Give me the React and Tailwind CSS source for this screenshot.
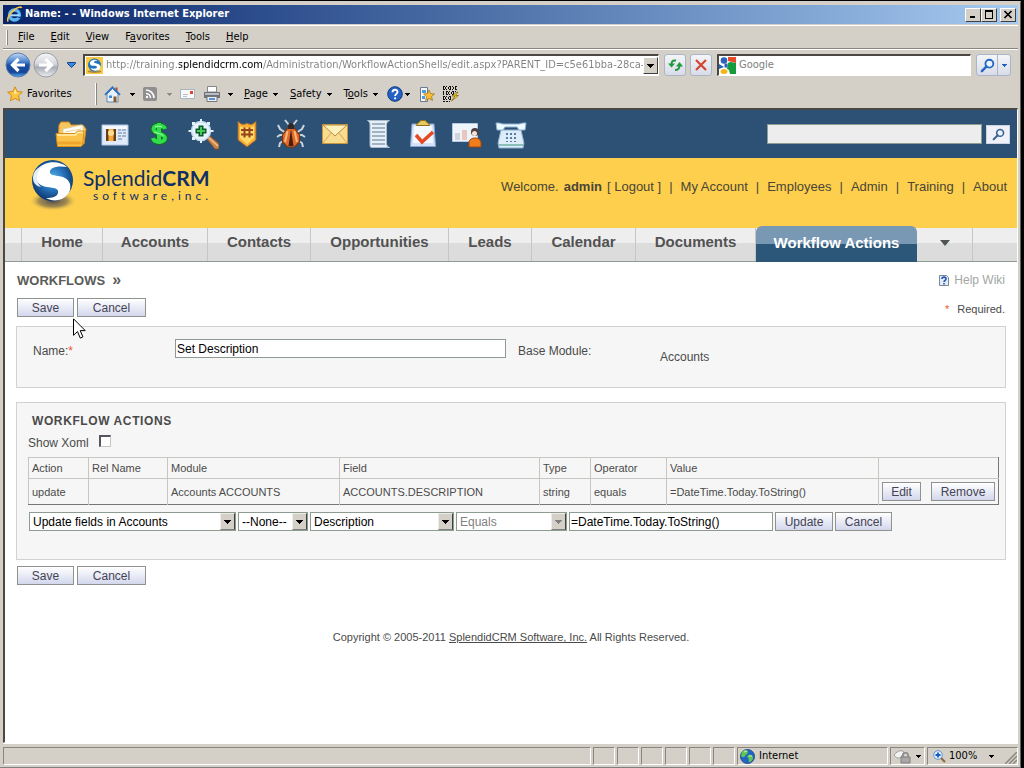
import React from "react";

const chromeFont = "font-['DejaVu_Sans_Condensed','DejaVu_Sans',sans-serif]";

function Caret({ className = "text-black" }) {
  return (
    <svg className={`shrink-0 ${className}`} width="5" height="3" viewBox="0 0 5 3" fill="currentColor" shapeRendering="crispEdges">
      <path d="M0 0h5v1H0zM1 1h3v1H1zM2 2h1v1H2z" />
    </svg>
  );
}

function IeLogo() {
  return (
    <svg className="shrink-0" width="17" height="17" viewBox="0 0 17 17" fill="none">
      <circle cx="8.500" cy="9" r="5" stroke="#5cb6f5" strokeWidth="3.400" />
      <path d="M4.500 9.300h9" stroke="#a6dcff" strokeWidth="2" />
      <path d="M10.500 10.700h5v2l-2.500-.8z" fill="#123c7c" />
      <path d="M2.200 15.500C.5 13 3.500 7.500 8 4c4-3 7-3.500 7.500-2" stroke="#f7c341" strokeWidth="1.600" />
    </svg>
  );
}

function CaptionButton({ label, children }) {
  return (
    <button aria-label={label} className="flex h-[14px] w-4 items-center justify-center border border-t-white border-l-white border-r-[#404040] border-b-[#404040] bg-[#d4d0c8]">
      <svg width="10" height="9" viewBox="0 0 10 9" fill="none" stroke="#000" shapeRendering="crispEdges">{children}</svg>
    </button>
  );
}

function TitleBar() {
  return (
    <header className="flex h-[19px] items-center justify-between bg-linear-to-r from-[#0a246a] to-[#a6caf0] pr-[2px] pl-[3px]">
      <div className="flex items-center gap-[2px] text-[11px] font-bold whitespace-nowrap text-white">
        <IeLogo />
        <h1>Name: - - Windows Internet Explorer</h1>
      </div>
      <div className="flex">
        <CaptionButton label="Minimize"><path d="M2 7h5" strokeWidth="2" /></CaptionButton>
        <CaptionButton label="Maximize"><path d="M1 1h8" strokeWidth="2" /><path d="M1.500 1v7.500h7V1" /></CaptionButton>
        <span className="w-[3px]" />
        <CaptionButton label="Close">
          <path d="M1.500 1l7 7M8.500 1l-7 7" strokeWidth="1.700" shapeRendering="auto" />
        </CaptionButton>
      </div>
    </header>
  );
}

function Grip() {
  return <span className="w-[2px] shrink-0 self-stretch border-l border-white border-r border-r-[#8a867e]" />;
}

function MenuBar() {
  const items = [["", "F", "ile"], ["", "E", "dit"], ["", "V", "iew"], ["F", "a", "vorites"], ["", "T", "ools"], ["", "H", "elp"]];
  return (
    <nav className="mt-px flex h-6 items-center gap-[10px] border-t border-b border-t-white border-b-[#8a867e] pl-[3px] text-[11px] text-black">
      <span className="flex h-[15px]"><Grip /></span>
      <div className="flex gap-4">
        {items.map(([a, b, c]) => (
          <button key={a + b + c}>{a}<u>{b}</u>{c}</button>
        ))}
      </div>
    </nav>
  );
}

function RoundArrow({ back }) {
  return (
    <svg width="26" height="26" viewBox="0 0 26 26">
      <defs>
        <linearGradient id="backFill" x1="0" y1="0" x2="0" y2="1">
          <stop offset="0" stopColor="#c4daf3" /><stop offset=".35" stopColor="#4e86d0" />
          <stop offset=".5" stopColor="#1a4fa6" /><stop offset=".8" stopColor="#164596" /><stop offset="1" stopColor="#56b4ee" />
        </linearGradient>
        <linearGradient id="forwardFill" x1="0" y1="0" x2="0" y2="1">
          <stop offset="0" stopColor="#f6f7f9" /><stop offset=".45" stopColor="#d4d7dc" />
          <stop offset=".6" stopColor="#a8adb6" /><stop offset="1" stopColor="#eceef1" />
        </linearGradient>
      </defs>
      <circle cx="13" cy="13" r="12" fill={back ? "url(#backFill)" : "url(#forwardFill)"} stroke={back ? "#5f7fae" : "#9a9da3"} />
      <path d={back ? "M20 13H8M13.500 7L7.500 13l6 6" : "M6 13h12M12.500 7l6 6-6 6"} fill="none" stroke="#fff" strokeWidth="3.200" />
    </svg>
  );
}

function SplendidIcon() {
  return (
    <svg className="shrink-0" width="17" height="17" viewBox="0 0 17 17">
      <path d="M0 0h17v17H0z" fill="#fdca45" />
      <ellipse cx="8.500" cy="14.500" rx="7" ry="1.500" fill="#a98b46" />
      <circle cx="8.500" cy="8" r="6.500" fill="#2374bd" />
      <path d="M12 3.500C8 1.500 3 4 4 7s7 1 7 3-4 2-6.500 1c2 4 9 3.500 10-.5S9 6.500 8 5.500s2-2 4-2z" fill="#fff" />
    </svg>
  );
}

function ToolButton({ label, className, children }) {
  return (
    <button aria-label={label} className={`flex h-[22px] items-center justify-center border border-[#a9b5c8] bg-linear-to-b from-[#f4f5f8] to-[#d9dce8] ${className}`}>
      {children}
    </button>
  );
}

function SearchGlyph({ size = 15, color = "#2467c4" }) {
  return (
    <svg width={size} height={size} viewBox="0 0 16 16" fill="none" stroke={color}>
      <circle cx="10" cy="6" r="4.200" strokeWidth="2" fill="#eaf3ff" />
      <path d="M7 9l-5 5" strokeWidth="2.600" strokeLinecap="round" />
    </svg>
  );
}

function AddressBar() {
  return (
    <div className="flex h-[31px] items-center border-t border-white pr-[7px] pl-[2px]">
      <div className="flex items-center gap-[2px]">
        <button aria-label="Back"><RoundArrow back /></button>
        <button aria-label="Forward"><RoundArrow /></button>
      </div>
      <button aria-label="Recent pages" className="mx-1 flex w-4 justify-center">
        <svg width="9" height="6" viewBox="0 0 9 6"><path d="M.5.5h8v1L4.500 5.500.5 1.500z" fill="#3a8be0" stroke="#1b3f86" /></svg>
      </button>
      <div className="flex h-[22px] min-w-0 flex-1 items-center border-t-2 border-r border-b border-l-2 border-t-[#4b4843] border-l-[#4b4843] border-r-white border-b-white bg-white pl-px">
        <SplendidIcon />
        <input
          aria-label="Address"
          readOnly
          value="http://training.splendidcrm.com/Administration/WorkflowActionShells/edit.aspx?PARENT_ID=c5e61bba-28ca-4526"
          className="ml-[3px] min-w-0 flex-1 bg-[linear-gradient(90deg,#808080_73px,#000_73px,#000_157px,#808080_157px)] bg-clip-text text-[11px] text-transparent outline-none"
        />
        <button aria-label="Show address list" className="flex h-[17px] w-[15px] items-center justify-center border border-t-white border-l-white border-r-[#404040] border-b-[#404040] bg-[#d4d0c8]">
          <svg width="7" height="4" viewBox="0 0 7 4" shapeRendering="crispEdges"><path d="M0 0h7v1H0zM1 1h5v1H1zM2 2h3v1H2zM3 3h1v1H3z" /></svg>
        </button>
      </div>
      <div className="mx-[5px] flex gap-1">
        <ToolButton label="Refresh" className="w-[22px] rounded-[3px]">
          <svg width="15" height="14" viewBox="0 0 15 14" fill="none" stroke="#1f9a3c" strokeWidth="2">
            <path d="M8 2.500C4 2 3.500 4 3.500 7" /><path d="M0 5.500h7L3.500 9.500z" fill="#1f9a3c" stroke="none" />
            <path d="M7 12c4 0 4.500-2 4.500-5" /><path d="M8 8.500h7L11.500 4z" fill="#1f9a3c" stroke="none" />
          </svg>
        </ToolButton>
        <ToolButton label="Stop" className="w-[22px] rounded-[3px]">
          <svg width="12" height="12" viewBox="0 0 12 12" fill="none" stroke="#d2452f" strokeWidth="2.200"><path d="M1 1l10 10M11 1L1 11" /></svg>
        </ToolButton>
      </div>
      <div className="flex h-[22px] w-[254px] items-center border-t-2 border-r border-b border-l-2 border-t-[#4b4843] border-l-[#4b4843] border-r-white border-b-white bg-white">
        <svg className="shrink-0" width="17" height="17" viewBox="0 0 17 17">
          <path d="M9 0h8v6l-4-1-4-1z" fill="#e8482c" />
          <path d="M9 6c3-2 5 0 8 0v11h-6l-1-4-2-1z" fill="#159a3e" />
          <circle cx="5" cy="3.500" r="3.300" fill="#2a62bb" /><path d="M0 7l5 3-5 2z" fill="#2a62bb" />
          <path d="M5.500 6.500h3v4h-3z" fill="#2a62bb" /><ellipse cx="5" cy="14.500" rx="3.500" ry="2.500" fill="#f4b51c" />
        </svg>
        <input aria-label="Search provider" placeholder="Google" className="ml-[3px] min-w-0 flex-1 text-[11px] outline-none placeholder:text-[#808080]" />
      </div>
      <div className="ml-[5px] flex">
        <ToolButton label="Search" className="w-[22px] rounded-l-[3px]"><SearchGlyph /></ToolButton>
        <ToolButton label="Search options" className="-ml-px w-[14px] rounded-r-[3px]"><Caret className="text-[#1d5fc0]" /></ToolButton>
      </div>
    </div>
  );
}

function CommandBar() {
  return (
    <div className="flex h-7 items-center pl-1 text-[11px] whitespace-nowrap text-black">
      <button className="flex w-[88px] items-center gap-1">
        <svg width="16" height="16" viewBox="0 0 16 16"><path d="M8 .8l2.200 4.700 5.200.6-3.900 3.500 1.100 5.200L8 12.300l-4.600 2.500 1.100-5.200L.6 6.100l5.200-.6z" fill="#fbc63e" stroke="#d98a16" /><path d="M8 3l1.500 3.500L12 7 7 8z" fill="#fff1a8" /></svg>
        Favorites
      </button>
      <span className="flex h-[22px]"><Grip /></span>
      <div className="ml-[7px] flex items-center">
        <button aria-label="Home" className="w-[26px]">
          <svg width="17" height="17" viewBox="0 0 17 17">
            <path d="M11.500 1.500h2v4h-2z" fill="#b5452c" />
            <path d="M3 8l5.500-5.500L14 8v8H3z" fill="#e6f1fc" stroke="#6d87a8" />
            <path d="M1 8.800L8.500 1.300 16 8.800" fill="none" stroke="#3173bd" strokeWidth="1.800" />
            <path d="M5 9.500h3V12H5z" fill="#3a86d8" /><path d="M9.500 10.500h3V16h-3z" fill="#8a5a2a" />
          </svg>
        </button>
        <Caret />
        <button aria-label="Feeds" className="ml-2 w-6">
          <svg width="14" height="14" viewBox="0 0 14 14" fill="none" stroke="#fff">
            <rect width="14" height="14" rx="2" fill="#8f8f8f" stroke="none" />
            <path d="M3 6.500A4.500 4.500 0 017.500 11M3 3a8 8 0 018 8" strokeWidth="1.600" /><circle cx="4" cy="10" r="1.200" fill="#fff" stroke="none" />
          </svg>
        </button>
        <Caret className="text-[#8f8b84]" />
        <button aria-label="Read mail" className="ml-2 w-6">
          <svg width="15" height="10" viewBox="0 0 15 10"><path d="M.5.5h14v9H.5z" fill="#fafafa" stroke="#a9b4c4" /><path d="M3 5.500h5M3 7.500h4" stroke="#b9c0cc" /><path d="M10 2h3v3h-3z" fill="#d8462f" /></svg>
        </button>
        <button aria-label="Print" className="w-6">
          <svg width="16" height="16" viewBox="0 0 16 16">
            <path d="M3.500.5h9V6h-9z" fill="#fff" stroke="#888" /><path d="M0 6h16v6H0z" fill="#6e7278" />
            <path d="M1 7h14v2H1z" fill="#b9bdc4" /><path d="M3 10.500h10v5H3z" fill="#e8eefb" stroke="#777" /><path d="M5 12h6v2H5z" fill="#5d92dd" />
          </svg>
        </button>
        <Caret />
        <button className="ml-[11px] flex items-center gap-[5px]"><span><u>P</u>age</span><Caret /></button>
        <button className="ml-3 flex items-center gap-[5px]"><span><u>S</u>afety</span><Caret /></button>
        <button className="ml-3 flex items-center gap-[5px]"><span>T<u>o</u>ols</span><Caret /></button>
        <button aria-label="Help" className="ml-[9px] flex items-center gap-[2px]">
          <svg width="16" height="16" viewBox="0 0 16 16"><circle cx="8" cy="8" r="7.300" fill="#2560c4" stroke="#0f3880" /><path d="M5.500 6.200C5.500 3 10.500 3 10.500 6c0 1.800-2.400 2-2.400 4" fill="none" stroke="#fff" strokeWidth="1.900" /><circle cx="8.100" cy="12.300" r="1.100" fill="#fff" /></svg>
          <Caret />
        </button>
        <button aria-label="Suggested sites" className="ml-[10px]">
          <svg width="15" height="15" viewBox="0 0 15 15"><path d="M.5.5h7v14h-7z" fill="#f7fafd" stroke="#6c7b90" /><path d="M2 3h4v3H2zM2 9h3v3H2z" fill="#4c9ae0" /><path d="M9 3l1.500 3.500 4 .5-3 2.500 1 4L9 11.500 5.500 13.500l1-4-3-2.500 4-.5z" fill="#fbbd33" stroke="#9b6a12" strokeWidth=".7" /></svg>
        </button>
        <button aria-label="Binary tools" className="ml-[7px]">
          <svg width="17" height="16" viewBox="0 0 17 16" fill="none" stroke="#111">
            <g shapeRendering="crispEdges">
              <path d="M1 .5h15M1 3.500h15" strokeDasharray="2 1 1 2" /><path d="M1 2h15" strokeWidth="2" strokeDasharray="1 1 1 2" />
              <path d="M1 5.500h15M1 8.500h12" strokeDasharray="1 2 2 1" /><path d="M1 7h13" strokeWidth="2" strokeDasharray="1 2 1 1" />
              <path d="M1 10.500h8M1 13.500h8" strokeDasharray="2 1 1 2" /><path d="M1 12h8" strokeWidth="2" strokeDasharray="1 1 1 2" />
              <path d="M1 15.500h7" strokeDasharray="2 1" />
            </g>
            <path d="M15 6l-5 4h3l-3.500 5 7-5.500h-3L16 6z" fill="#ffd92b" stroke="#7a5b00" strokeWidth=".7" />
          </svg>
        </button>
      </div>
    </div>
  );
}

const moduleIcons = [
  ["Accounts", <g key="g">
    <path d="M4 7l2-3h8l2 3 12 0 3 4-2 15H3z" fill="#f6c55c" stroke="#d18c22" />
    <path d="M8 11l18-4 2 1v13H8z" fill="#fffdf3" stroke="#dfd0a4" /><path d="M10 14l16-3" stroke="#e4d5a9" />
    <path d="M1 15.500h19l2.500-2.500H29L27.500 27 26 28.500H2.500z" fill="#fbc24a" stroke="#dd8c16" /><path d="M2 17h18.500l2.500-2.500h5" fill="none" stroke="#ffeeb2" strokeWidth="1.500" />
    <path d="M3 25h23.500" stroke="#f2a52b" strokeWidth="3" />
  </g>],
  ["Contacts", <g key="g">
    <path d="M3 7h26v20H3z" fill="#dfeafa" stroke="#b6cbe8" /><path d="M4 8h24v3H4z" fill="#f4f9ff" /><path d="M7 11h10v12H7z" fill="#6b3d13" />
    <path d="M9.500 11h5v12h-5z" fill="#f4ab3c" /><circle cx="12" cy="15" r="3" fill="#ffdc94" />
    <path d="M19 12h3M23 12h4M19 15h4M24 15h3M19 18h3M23 18h4M19 21h4" stroke="#8fa0bb" strokeWidth="1.400" />
  </g>],
  ["Opportunities", <g key="g" fill="none">
    <path d="M22 11C21 7 11 6.500 10.500 11S22 15 22 20s-11 5-12 0M16 4v23" stroke="#176b2a" strokeWidth="6" />
    <path d="M22 11C21 7 11 6.500 10.500 11S22 15 22 20s-11 5-12 0M16 5v21" stroke="#30dd4a" strokeWidth="4" />
    <path d="M12 9c2-1 5-1 7 0M11 14c4 1.500 7 1.500 9.500 4" stroke="#b2ffb4" strokeWidth="1" />
  </g>],
  ["Leads", <g key="g">
    <path d="M20 21l3-3 9 8v5h-4z" fill="#c88650" stroke="#8a5426" /><path d="M22 20l9 8" stroke="#f0be8a" strokeWidth="1.500" />
    <circle cx="14" cy="13" r="9.500" fill="#e8f4fd" stroke="#c3dcf0" strokeWidth="1.500" />
    <path d="M13 1h2v3h-2zM1.500 12h3v2h-3zM23.500 12h3v2h-3zM5 4h3v3H5zM20 4h3v3h-3zM5 19h3v3H5zM13 22h2v3h-2z" fill="#e4f1fb" />
    <path d="M11.500 7.500h5v3h3v5h-3v3h-5v-3h-3v-5h3z" fill="#0c5a2b" /><path d="M13 9h2v3h3v2h-3v3h-2v-3h-3v-2h3z" fill="#45cf58" />
  </g>],
  ["Cases", <g key="g">
    <path d="M7 3c3 4 6 4 9 2 3 2 6 2 9-2v19l-9 7-9-7z" fill="#fbae30" stroke="#8a6440" />
    <path d="M9 8c3 2 5 2 7 1 2 1 4 1 7-1v12l-7 6-7-6z" fill="#ffd968" />
    <path d="M10 12h12M10 16.500h12M13.500 9.500v10M18.500 9.500v10" stroke="#94441a" strokeWidth="2" />
  </g>],
  ["Bugs", <g key="g">
    <path d="M10 2l4 5M22 2l-4 5M3 7l2 4 6 4M29 7l-2 4-6 4M2 19l3-2h6M30 19l-3-2h-6M4 29l1-4 6-4M28 29l-1-4-6-4" fill="none" stroke="#c9d3dc" strokeWidth="2" />
    <path d="M7.500 17l6-8h5l6 8v7l-5 5h-7l-5-5z" fill="#e06b2a" stroke="#7a3414" strokeWidth="1.200" />
    <path d="M13 8c0-4 6-4 6 0v3h-6z" fill="#322826" /><path d="M16 11l2.500 17h-5z" fill="#4a1d0f" />
    <path d="M12.500 13l-2.500 11M19.500 13L22 24" stroke="#ffb67a" strokeWidth="2" />
  </g>],
  ["Emails", <g key="g">
    <path d="M3.500 6.500h25v19h-25z" fill="#f8dc8f" stroke="#c6953d" /><path d="M4 7l12 11L28 7z" fill="#fdf0bd" stroke="#b98e41" />
    <path d="M4 25l8-10M28 25l-8-10" stroke="#d5a957" />
  </g>],
  ["Documents", <g key="g">
    <path d="M4.500 2.500h22c-2 1-3 2-3 5v18c0 2 1 3 3 4H9c-2 0-2-1-2-3V7c0-2-1-4-2.500-4.500z" fill="#e7f0f9" stroke="#a9bccd" />
    <path d="M9 6h13M9 10h13M9 14h13M9 18h13M9 22h13M9 26h13" stroke="#8c9fb3" strokeWidth="1.500" />
  </g>],
  ["Tasks", <g key="g">
    <path d="M5 6h22l1.500 22.500h-25z" fill="#d3e2f8" stroke="#86a3cd" /><path d="M7 8h18l1 17H6z" fill="#f4f8ff" />
    <path d="M9.500 7.500c0-3 3-2 4-5h5c1 3 4 2 4 5z" fill="#e8c95c" stroke="#8d701b" /><path d="M9 17l6 7L26 14" fill="none" stroke="#e54a24" strokeWidth="3.500" />
  </g>],
  ["Meetings", <g key="g">
    <path d="M1.500 5.500h25v18h-25z" fill="#eef4fc" stroke="#b6c8e2" /><path d="M4 15h5v7H4z" fill="#cfd3da" /><path d="M11 12h5v10h-5z" fill="#e9c7bf" />
    <circle cx="24" cy="14" r="4" fill="#4b4245" /><circle cx="23.500" cy="15.500" r="2.500" fill="#f6e3d6" /><path d="M18 29v-5c1-3 3-4 6-4s5 1 6 4v5z" fill="#ee7d1c" stroke="#a8450d" />
  </g>],
  ["Calls", <g key="g">
    <path d="M6 12h20l3 13-1 5H4l-1-5z" fill="#dcecf9" stroke="#8eacc8" /><path d="M1 5h3l4 1h16l4-1h3l-1 7h-6l-2-3H10l-2 3H2z" fill="#eef8ff" stroke="#8eb4d3" />
    <path d="M11 15h2v2h-2zM15 15h2v2h-2zM19 15h2v2h-2zM11 19h2v2h-2zM15 19h2v2h-2zM19 19h2v2h-2zM11 23h2v1h-2zM15 23h2v1h-2zM19 23h2v1h-2z" fill="#5a7ea0" />
    <path d="M4 27h24" stroke="#6fb2a4" strokeWidth="1.500" />
  </g>],
];

function ModuleBar() {
  return (
    <div className="flex h-12 items-center justify-between bg-[#2d5174] pr-[7px] pl-11">
      <div className="flex">
        {moduleIcons.map(([name, art]) => (
          <a key={name} href="#" aria-label={name} className="flex w-11 justify-center">
            <svg width="32" height="32" viewBox="0 0 32 32">{art}</svg>
          </a>
        ))}
      </div>
      <form className="flex items-center gap-1">
        <input aria-label="Search records" className="h-5 w-[215px] border border-[#8e9b91] bg-[#ededee]" />
        <button type="button" aria-label="Search records" className="flex h-[19px] w-6 items-center justify-center border border-[#c9d3e4] bg-[#f0f1f8]"><SearchGlyph size={13} color="#3c6291" /></button>
      </form>
    </div>
  );
}

function Brand() {
  return (
    <div className="flex items-start">
      <svg width="48" height="54" viewBox="0 0 48 54">
        <defs>
          <radialGradient id="ball" cx=".5" cy=".45" r=".6"><stop offset="0" stopColor="#58b4ee" /><stop offset=".5" stopColor="#2470b6" /><stop offset="1" stopColor="#092a60" /></radialGradient>
          <radialGradient id="ballShadow"><stop offset="0" stopColor="#4c4a4d" /><stop offset=".6" stopColor="#8f7c50" stopOpacity=".8" /><stop offset="1" stopColor="#fed04c" stopOpacity="0" /></radialGradient>
        </defs>
        <ellipse cx="24" cy="43" rx="24" ry="10" fill="url(#ballShadow)" />
        <circle cx="23.500" cy="22.500" r="20.500" fill="url(#ball)" />
        <path d="M38 9C30 2 15 3 9 11c-6 9 0 17 9 18 7 1 12 1 11 6-1 4-6 5-12 5 8 5 21 2 24-8 2-9-4-13-12-14-5-1-9-1-8-5 2-5 11-5 17-4z" fill="#fff" />
        <path d="M14 8C7 13 6 24 12 29c-5-1-8-4-8-9C4 14 8 9 14 8z" fill="#e3edf7" />
      </svg>
      <div className="ml-[6px] pt-[6px] font-['Lato',sans-serif] text-[#0f2f66]">
        <div className="text-[21px] leading-7">Splendid<b>CRM</b></div>
        <div className="-mt-[2px] pl-[10px] text-xs leading-3 tracking-[4px]">software,inc.</div>
      </div>
    </div>
  );
}

const accountLinks = ["My Account", "Employees", "Admin", "Training", "About"];

function BrandBar() {
  return (
    <div className="flex h-[70px] items-start justify-between bg-[#fdcf4d] pr-[10px] pl-6 text-[13px] whitespace-nowrap text-[#4a4536]">
      <Brand />
      <div className="flex gap-2 pt-5 leading-[18px]">
        <span className="flex gap-[5px]"><span>Welcome.</span><b>admin</b><span>[ <a href="#">Logout</a> ]</span></span>
        {accountLinks.map((label) => (
          <React.Fragment key={label}><span>|</span><a href="#">{label}</a></React.Fragment>
        ))}
      </div>
    </div>
  );
}

const tabs = [
  ["Home", "w-[81px]"], ["Accounts", "w-[105px]"], ["Contacts", "w-[103px]"], ["Opportunities", "w-[138px]"],
  ["Leads", "w-[83px]"], ["Calendar", "w-[104px]"], ["Documents", "w-[120px]"],
];

function TabBar() {
  return (
    <nav className="flex h-[34px] items-end border-b border-[#8d9c95] bg-[linear-gradient(#eeeeee_15px,#dcdcdc_15px)] text-center text-[15px] leading-7 font-bold whitespace-nowrap text-[#525252]">
      <span className="h-full w-[17px] border-r border-[#c6c6c6]" />
      {tabs.map(([label, width]) => (
        <a key={label} href="#" className={`h-full border-r border-[#c6c6c6] ${width}`}>{label}</a>
      ))}
      <a href="#" className="-mb-px h-[36px] w-[161px] shrink-0 rounded-t-md bg-[linear-gradient(#7898b4_18px,#2c5779_18px)] pt-[3px] text-white">Workflow Actions</a>
      <button aria-label="More modules" className="flex h-full w-[56px] items-center justify-center border-r border-[#c6c6c6] pb-1">
        <svg width="10" height="6" viewBox="0 0 10 6"><path d="M0 0h10L5 6z" fill="#4f554f" /></svg>
      </button>
    </nav>
  );
}

function FormButton({ children, className }) {
  return (
    <button className={`h-[19px] border border-[#8f928f] bg-linear-to-b from-white to-[#d3d7ec] text-xs leading-4 text-[#444455] ${className}`}>{children}</button>
  );
}

function SaveCancel() {
  return (
    <div className="flex gap-[3px] pl-px">
      <FormButton className="w-[57px]">Save</FormButton>
      <FormButton className="w-[69px]">Cancel</FormButton>
    </div>
  );
}

function Select({ label, value, className, disabled }) {
  return (
    <div className={`relative h-[19px] ${className}`}>
      <select aria-label={label} disabled={disabled} className="h-full w-full appearance-none border border-[#8e9b91] bg-white pl-[3px] text-xs leading-4 text-black opacity-100 disabled:text-[#808080]">
        <option>{value}</option>
      </select>
      <span className="pointer-events-none absolute top-px right-px flex h-[17px] w-[15px] items-center justify-center border border-t-[#eeece8] border-l-[#eeece8] border-r-[#404040] border-b-[#808080] bg-[#d4d0c8]">
        <svg width="7" height="4" viewBox="0 0 7 4" fill={disabled ? "#808080" : "#000"} shapeRendering="crispEdges"><path d="M0 0h7v1H0zM1 1h5v1H1zM2 2h3v1H2zM3 3h1v1H3z" /></svg>
      </span>
    </div>
  );
}

const columns = [
  ["Action", "w-[60px]"], ["Rel Name", "w-[79px]"], ["Module", "w-[172px]"], ["Field", "w-[200px]"],
  ["Type", "w-[51px]"], ["Operator", "w-[76px]"], ["Value", ""], ["", "w-[120px]"],
];
const action = ["update", "", "Accounts ACCOUNTS", "ACCOUNTS.DESCRIPTION", "string", "equals", "=DateTime.Today.ToString()"];

function ActionsTable() {
  return (
    <table className="w-full table-fixed border-collapse border border-[#c9c6c1] border-r-[#77777a] border-b-[#77777a] text-left text-[11px] leading-4">
      <thead>
        <tr className="h-[21px]">
          {columns.map(([label, width], i) => (
            <th key={i} className={`border-r border-b border-[#c9c6c1] px-[3px] font-normal last:border-r-[#77777a] ${width}`}>{label}</th>
          ))}
        </tr>
      </thead>
      <tbody>
        <tr className="h-[26px]">
          {action.map((value, i) => <td key={i} className="border-r border-[#c9c6c1] px-[3px]">{value}</td>)}
          <td className="px-[3px]">
            <div className="flex justify-between">
              <FormButton className="w-[39px]">Edit</FormButton>
              <FormButton className="w-16">Remove</FormButton>
            </div>
          </td>
        </tr>
      </tbody>
    </table>
  );
}

function Content() {
  return (
    <main className="relative flex-1 bg-white px-[11px] pt-2 text-xs text-[#4a4a4a]">
      <div className="flex h-5 items-center justify-between">
        <h2 className="pl-px text-[13px] font-bold text-[#5b5b58]">WORKFLOWS &nbsp;<span className="text-base">»</span></h2>
        <a href="#" className="flex items-center gap-1 pr-px text-[#a3a6a3]">
          <svg width="12" height="13" viewBox="0 0 12 13"><path d="M1.500 1.500h7l2 2v8h-9z" fill="#e4ecf8" stroke="#7c8598" /><path d="M4 5c0-2.500 4-2.500 4 0 0 1.500-2 1.500-2 3M6 9v1.500" fill="none" stroke="#2456b8" strokeWidth="1.600" /></svg>
          Help Wiki
        </a>
      </div>
      <div className="mt-2 flex justify-between">
        <SaveCancel />
        <p className="flex gap-2 pt-[3px] pr-px text-[11px] leading-4"><span className="text-[#f0542a]">*</span>Required.</p>
      </div>

      <section className="mt-[9px] grid h-[62px] grid-cols-[142px_343px_142px_1fr] items-start border border-[#d2d2d2] bg-[#f6f6f6] pt-3 pl-4 leading-4">
        <label htmlFor="name" className="pt-1">Name:<span className="text-[#f0542a]">*</span></label>
        <input id="name" defaultValue="Set Description" className="h-[19px] w-[331px] border border-[#8e9b91] bg-white pl-px text-black" />
        <span className="pt-1">Base Module:</span>
        <span className="pt-[10px]">Accounts</span>
      </section>

      <section className="mt-[14px] h-[158px] border border-[#d2d2d2] bg-[#f6f6f6] pt-[10px] pr-[6px] pl-[11px] leading-4">
        <h3 className="pl-1 font-bold tracking-wider">WORKFLOW ACTIONS</h3>
        <div className="mt-1 mb-2 flex h-4 items-center gap-[10px] pb-px">
          <label htmlFor="xoml" className="pt-[5px]">Show Xoml</label>
          <input id="xoml" type="checkbox" className="h-3 w-3 appearance-none border border-t-2 border-l-2 border-[#c9c6c1] border-t-[#55555e] border-l-[#55555e] bg-white" />
        </div>
        <ActionsTable />
        <div className="mt-[7px] flex gap-[2px] pl-px">
          <Select label="Action" value="Update fields in Accounts" className="w-[207px]" />
          <Select label="Relationship" value="--None--" className="w-[70px]" />
          <Select label="Field" value="Description" className="w-[144px]" />
          <Select label="Operator" value="Equals" disabled className="w-[111px]" />
          <input aria-label="Value" defaultValue="=DateTime.Today.ToString()" className="h-[19px] w-[204px] border border-[#8e9b91] bg-white pl-px text-black" />
          <FormButton className="w-[58px]">Update</FormButton>
          <FormButton className="w-[57px]">Cancel</FormButton>
        </div>
      </section>

      <div className="mt-[6px]"><SaveCancel /></div>
      <footer className="mt-11 text-center text-[11px] leading-4">
        Copyright © 2005-2011 <a href="#" className="underline">SplendidCRM Software, Inc.</a> All Rights Reserved.
      </footer>

      <svg className="pointer-events-none absolute top-[56px] left-[68px]" width="13" height="22" viewBox="0 0 13 22">
        <path d="M.5.8v16.500l4-3.800 2.800 6.600 2.600-1.200-2.700-6.300h5z" fill="#fff" stroke="#000" />
      </svg>
    </main>
  );
}

function Pane({ className, children }) {
  return <div className={`flex h-[18px] items-center border border-t-[#8a867e] border-l-[#8a867e] border-r-white border-b-white ${className}`}>{children}</div>;
}

function StatusBar() {
  return (
    <div className="flex h-6 items-center gap-[2px] border-t border-white pt-px text-[11px] text-black">
      <Pane className="flex-1" />
      {[0, 1, 2, 3, 4, 5].map((i) => <Pane key={i} className="w-[22px]" />)}
      <Pane className="w-[151px] gap-1 pl-[2px]">
        <svg width="15" height="15" viewBox="0 0 15 15"><circle cx="7.500" cy="7.500" r="7" fill="#2365c4" stroke="#244e8f" /><path d="M2 3c3-3 6-2 6 0s-2 2-3 4-3 1-4 0zM8 6c4-1 5 1 5 3s-3 5-4 4 1-4-2-5z" fill="#5fc753" /><path d="M4 3l3-1M9 7h3" stroke="#cbeec3" /></svg>
        Internet
      </Pane>
      <Pane className="w-[35px] gap-[5px] pl-[2px]">
        <svg width="18" height="15" viewBox="0 0 18 15"><path d="M1 6c4-5 8-5 10-3l-3 5c-2 2-5 1-7-2z" fill="#f2f2f2" stroke="#9b9b9b" /><path d="M10 8V6c0-3 5-3 5 0v2" fill="none" stroke="#888" strokeWidth="1.500" /><path d="M8 8h9v6H8z" fill="#a8a8a8" stroke="#7e7e7e" /></svg>
        <Caret />
      </Pane>
      <Pane className="w-[91px] justify-between pl-[5px]">
        <span className="flex items-center gap-[3px]">
          <svg width="13" height="13" viewBox="0 0 13 13"><path d="M8 8l4 4" stroke="#8d6b40" strokeWidth="2.200" /><circle cx="5" cy="5" r="4.300" fill="#e3f1ff" stroke="#5f93cf" /><path d="M5 2.500v5M2.500 5h5" stroke="#1659c4" strokeWidth="1.800" /></svg>
          100%
        </span>
        <Caret />
        <svg className="mt-1" width="12" height="12" viewBox="0 0 12 12"><path d="M0 12L12 0M4 12l8-8M8 12l4-4" stroke="#8a867e" strokeWidth="1.500" /></svg>
      </Pane>
    </div>
  );
}

export default function App() {
  return (
    <div className="flex min-h-screen flex-col bg-black pt-px pr-[3px] font-['Liberation_Sans',Arial,sans-serif]">
      <div className={`flex flex-1 flex-col border-t border-r border-b border-t-[#d4d0c8] border-r-[#606060] border-b-[#808080] bg-[#d4d0c8] pt-[3px] pr-[2px] pl-[3px] ${chromeFont}`}>
        <TitleBar />
        <MenuBar />
        <AddressBar />
        <CommandBar />
        <div className="flex flex-1 flex-col border-t-2 border-r border-b border-l-2 border-t-[#4b4843] border-l-[#4b4843] border-r-white border-b-white font-['Liberation_Sans',Arial,sans-serif]">
          <ModuleBar />
          <BrandBar />
          <TabBar />
          <Content />
        </div>
        <StatusBar />
      </div>
    </div>
  );
}
